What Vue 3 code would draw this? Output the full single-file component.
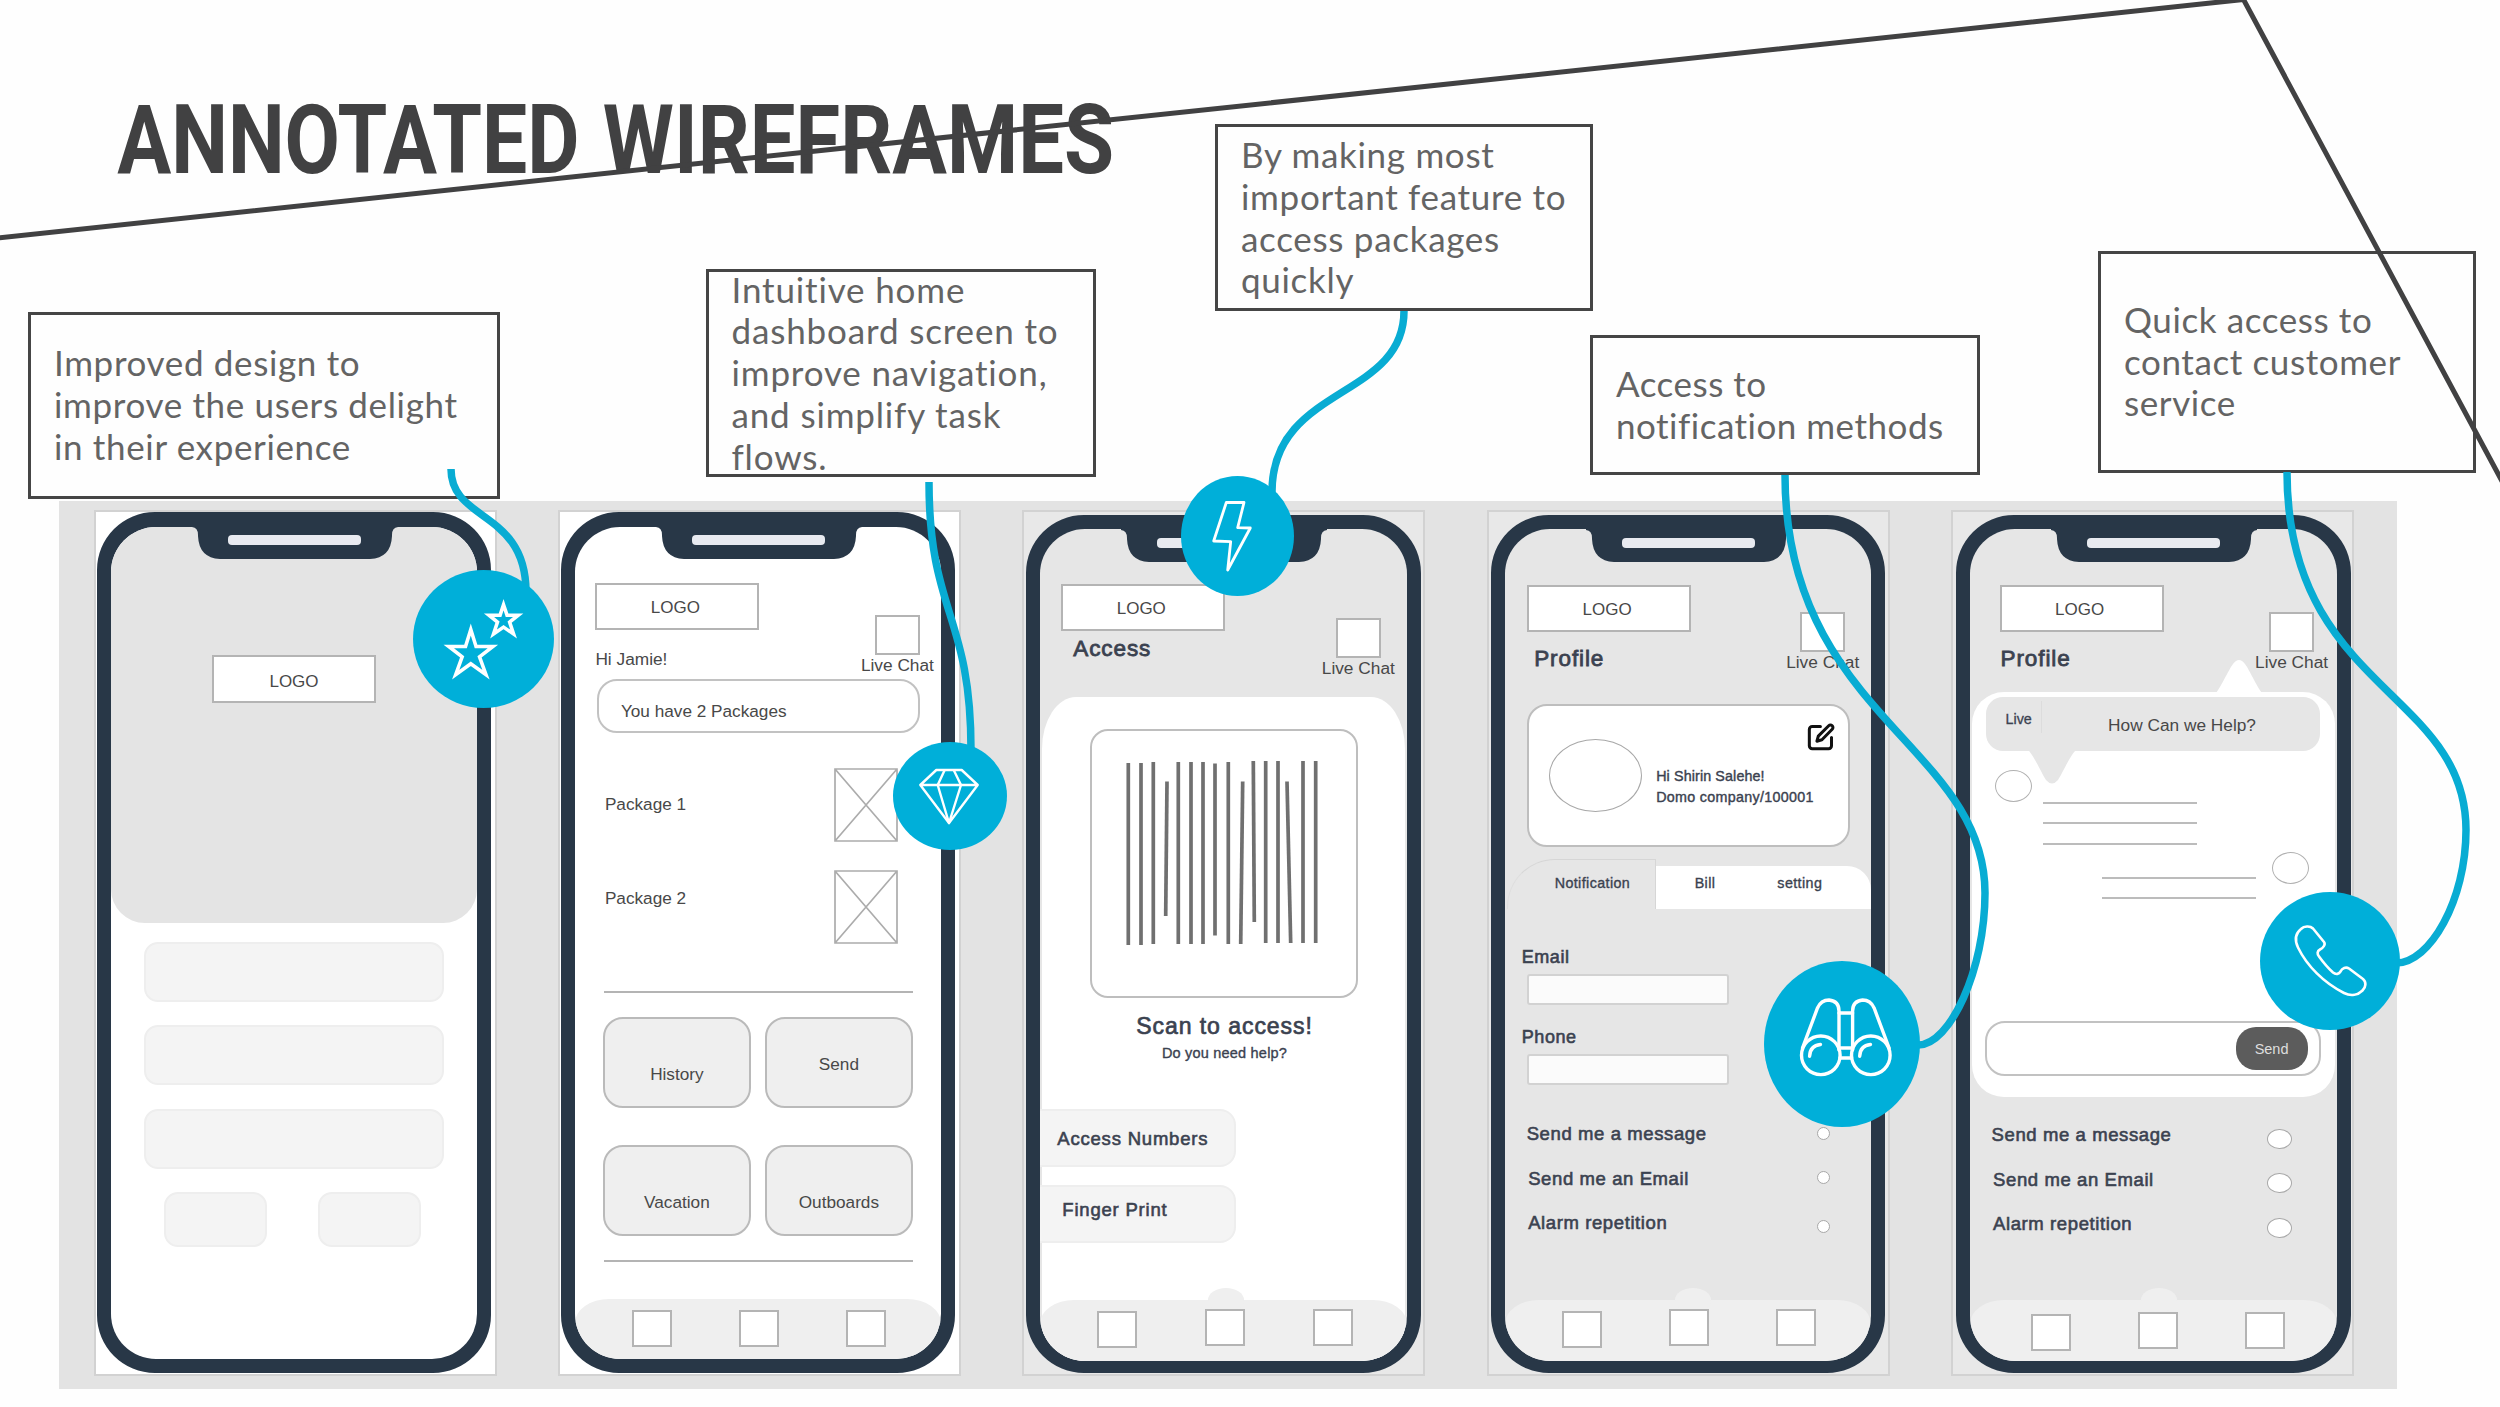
<template>
  <div class="slide">
    <header class="slide-head">
      <svg class="slide-title" width="1240" height="100" viewBox="0 0 1240 100">
        <g transform="scale(0.83 1)">
          <text x="-1" y="78" textLength="557" lengthAdjust="spacingAndGlyphs">ANNOTATED</text>
          <text x="584" y="78" textLength="616" lengthAdjust="spacingAndGlyphs">WIREFRAMES</text>
        </g>
      </svg>
    </header>

    <main class="board">
      <!-- splash -->
      <div class="artboard white">
        <div class="phone">
          <div class="screen">
            <div class="splash">
              <div class="logo"><span>LOGO</span></div>
            </div>
            <div class="login">
              <div v-for="n in 3" :key="n" class="login-field"></div>
              <div class="login-actions">
                <div class="login-btn"></div>
                <div class="login-btn"></div>
              </div>
            </div>
          </div>
          <div class="notch"><svg viewBox="0 0 206 47"><path :d="notchPath" /></svg><i></i></div>
        </div>
      </div>

      <!-- home -->
      <div class="artboard white">
        <div class="phone">
          <div class="screen home">
            <div class="top">
              <div class="top-left">
                <div class="logo"><span>LOGO</span></div>
                <div class="hello">Hi Jamie!</div>
              </div>
              <div class="chat"><div class="chat-box"></div>Live Chat</div>
            </div>
            <div class="notice">You have 2 Packages</div>
            <div class="packages">
              <div v-for="p in packages" :key="p" class="package">
                <span>{{ p }}</span>
                <svg class="thumb" viewBox="0 0 64 74">
                  <path d="M1 1H63V73H1ZM1 1L63 73M63 1L1 73" />
                </svg>
              </div>
            </div>
            <div class="rule"></div>
            <div class="tiles">
              <div v-for="t in tiles" :key="t" class="tile" :class="t.toLowerCase()">{{ t }}</div>
            </div>
            <div class="rule"></div>
            <div class="tabbar"><b></b><b></b><b></b></div>
          </div>
          <div class="notch"><svg viewBox="0 0 206 47"><path :d="notchPath" /></svg><i></i></div>
        </div>
      </div>

      <!-- access -->
      <div class="artboard">
        <div class="phone short">
          <div class="screen access">
            <div class="top">
              <div class="top-left">
                <div class="logo"><span>LOGO</span></div>
                <div class="heading">Access</div>
              </div>
              <div class="chat"><div class="chat-box"></div>Live Chat</div>
            </div>
            <div class="sheet">
              <div class="barcode">
                <svg viewBox="0 0 268 268">
                  <line v-for="(b, i) in bars" :key="i" :x1="b[0]" :y1="b[1]" :x2="b[2]" :y2="b[3]" />
                </svg>
              </div>
              <div class="scan">Scan to access!</div>
              <div class="help">Do you need help?</div>
              <div class="side-btn first">Access Numbers</div>
              <div class="side-btn second">Finger Print</div>
            </div>
            <div class="tabbar bump"><b></b><b></b><b></b></div>
          </div>
          <div class="notch"><svg viewBox="0 0 206 47"><path :d="notchPath" /></svg><i></i></div>
        </div>
      </div>

      <!-- profile -->
      <div class="artboard">
        <div class="phone short">
          <div class="screen profile">
            <div class="top">
              <div class="top-left">
                <div class="logo"><span>LOGO</span></div>
                <div class="heading">Profile</div>
              </div>
              <div class="chat"><div class="chat-box"></div>Live Chat</div>
            </div>
            <div class="card">
              <div class="avatar"></div>
              <div class="who">
                <div>Hi Shirin Salehe!</div>
                <div class="company">Domo company/100001</div>
              </div>
              <svg class="edit" viewBox="0 0 24 24">
                <path d="M11.5 3H4.5a2.5 2.5 0 0 0-2.5 2.5v14A2.5 2.5 0 0 0 4.5 22h14a2.5 2.5 0 0 0 2.5-2.5v-7" />
                <path d="M18.6 2.4a2.1 2.1 0 0 1 3 3L12.8 14.4l-4.3 1.2 1.2-4.3z" />
              </svg>
            </div>
            <div class="tabs">
              <div class="tab-active">Notification</div>
              <div class="tab-rest"><span class="bill">Bill</span><span>setting</span></div>
            </div>
            <div class="form">
              <label>Email</label>
              <div class="input"></div>
              <label>Phone</label>
              <div class="input"></div>
            </div>
            <div class="options">
              <div v-for="o in options" :key="o" class="option"><span>{{ o }}</span><i></i></div>
            </div>
            <div class="tabbar bump"><b></b><b></b><b></b></div>
          </div>
          <div class="notch"><svg viewBox="0 0 206 47"><path :d="notchPath" /></svg><i></i></div>
        </div>
      </div>

      <!-- live chat -->
      <div class="artboard last">
        <div class="phone short">
          <div class="screen live">
            <div class="top">
              <div class="top-left">
                <div class="logo"><span>LOGO</span></div>
                <div class="heading">Profile</div>
              </div>
              <div class="chat"><div class="chat-box"></div>Live Chat</div>
            </div>
            <div class="talk">
              <svg class="tip-up" viewBox="0 0 48 36"><path d="M0 35C4 32 14 10 18 5Q24 -3 30 5C34 10 44 32 48 35Z" /></svg>
              <div class="bubble">
                <span class="live-tag">Live</span>
                <span class="question">How Can we Help?</span>
                <svg class="tip-down" viewBox="0 0 48 34"><path d="M0 0C5 4 14 24 18 30Q24 37 30 30C34 24 43 4 48 0Z" /></svg>
              </div>
              <div class="msg left">
                <div class="face"></div>
                <div class="lines"><hr /><hr /><hr /></div>
              </div>
              <div class="msg right">
                <div class="lines"><hr /><hr /></div>
                <div class="face"></div>
              </div>
              <div class="composer"><div class="send-btn">Send</div></div>
            </div>
            <div class="options">
              <div v-for="o in options" :key="o" class="option"><span>{{ o }}</span><i></i></div>
            </div>
            <div class="tabbar bump"><b></b><b></b><b></b></div>
          </div>
          <div class="notch"><svg viewBox="0 0 206 47"><path :d="notchPath" /></svg><i></i></div>
        </div>
      </div>
    </main>

    <!-- annotations -->
    <div v-for="c in callouts" :key="c.id" class="callout" :class="c.id">
      <div v-for="l in c.lines" :key="l">{{ l }}</div>
    </div>

    <svg class="overlay" viewBox="0 0 2500 1407">
      <path class="edge" d="M-10 238.8L2243.5 -0.5L2510 496" />
      <path v-for="d in connectors" :key="d" class="wire" :d="d" />
    </svg>

    <div class="badge stars">
      <svg viewBox="0 0 141 139" stroke-width="3.6">
        <path d="M57.7 60L63 77H80L66.5 87.5L73 105.5L57.7 94.5L42.5 105.5L49 87.5L35.5 77H52.4Z" />
        <path d="M90.7 35L94.2 45.5H105.5L96.8 52.5L100.8 64.5L90.7 57.5L80.6 64.5L84.6 52.5L76 45.5H87.2Z" />
      </svg>
    </div>
    <div class="badge diamond">
      <svg viewBox="0 0 114 108" stroke-width="2.4" stroke-linejoin="round">
        <path d="M43.3 28H68.7L84.7 43L56 81L27.3 43ZM27.3 43H84.7" />
        <path d="M51.7 28L44.7 43L56 81L68 43L60.7 28" />
      </svg>
    </div>
    <div class="badge bolt">
      <svg viewBox="0 0 113 120" stroke-width="2.8" stroke-linejoin="round">
        <path d="M45.3 26.5H63L56.7 51.7L69.3 52L46.7 94L49.7 65.7L32.7 65Z" />
      </svg>
    </div>
    <div class="badge binoculars">
      <svg viewBox="0 0 156 166" stroke-width="3.4" stroke-linecap="round">
        <circle cx="56.8" cy="94.3" r="19.3" />
        <circle cx="106.8" cy="94.3" r="19.3" />
        <path d="M38.5 87L53.500 47Q57 39 65 39Q75 40 75 50V89M125.1 87L110.1 47Q106.600 39 98.6 39Q88.6 40 88.6 50V89" />
        <path d="M75 52H88.6M75.5 87H88M76 97H87.6" />
        <path d="M45.6 95.3Q46 84.5 56.5 83.5M95.7 95.3Q96 84.5 106.5 83.5" />
      </svg>
    </div>
    <div class="badge call">
      <svg viewBox="0 0 140 138" stroke-width="2.6" stroke-linejoin="round">
        <path d="M41 37C44 34 50 33.5 53 36.5L64 50C66 52.5 63 56 60 57.5C57 59 57 62 59 64.5C63 70 68 76 73 80.5C76 83 79 82 80.5 79.5C82 76 86 74.5 89 76.5L103 87C106.5 90 106 95 102.5 98.5C98 103 91 104.5 84 101C64 91 47 74 38 55.5C34 47 36 41 41 37Z" />
      </svg>
    </div>
  </div>
</template>

<script setup>
const packages = ['Package 1', 'Package 2']
const tiles = ['History', 'Send', 'Vacation', 'Outboards']
const options = ['Send me a message', 'Send me an Email', 'Alarm repetition']

const notchPath = 'M0 0H206V15Q200 15.5 200 23V24Q199 46 178 47H28Q7 46 6 24V23Q6 15.5 0 15Z'

// x1, y1, x2, y2 inside the barcode card
const bars = [
  [38.3, 34, 38.3, 216],
  [51, 34, 51, 216],
  [63.3, 33, 63.3, 215],
  [77, 52.5, 75.7, 187],
  [88.3, 33, 88.3, 215],
  [101, 33, 101, 215],
  [113, 33, 113, 215],
  [125, 34.5, 125, 206.5],
  [138.3, 33, 138.3, 215],
  [152.7, 52.5, 150.7, 215],
  [163.3, 32, 164.3, 193],
  [175.7, 32, 175.7, 214],
  [188, 32, 188, 214],
  [197, 52.5, 200.7, 214],
  [213, 32, 213, 214],
  [225.7, 32, 225.7, 214],
]

const callouts = [
  { id: 'delight', lines: ['Improved design to', 'improve the users delight', 'in their experience'] },
  {
    id: 'dashboard',
    lines: ['Intuitive home', 'dashboard screen to', 'improve navigation,', 'and simplify task', 'flows.'],
  },
  { id: 'feature', lines: ['By making most', 'important feature to', 'access packages', 'quickly'] },
  { id: 'notify', lines: ['Access to', 'notification methods'] },
  { id: 'service', lines: ['Quick access to', 'contact customer', 'service'] },
]

const connectors = [
  'M451 469C451 522 526 510 526 592',
  'M929 482C929 614 971 614 971 750',
  'M1404 311C1404 400 1272 385 1272 492',
  'M1785 475C1785 715 1985 745 1985 893C1985 970 1950 1045 1918 1045',
  'M2287 472C2287 690 2466 690 2466 830C2466 900 2430 963 2396 963',
]
</script>

<style>
body {
  margin: 0;
  background: #fff;
}
</style>

<style scoped>
.slide {
  position: relative;
  width: 2500px;
  height: 1407px;
  overflow: hidden;
  background: #fefefe;
  font-family: 'Liberation Sans', Arial, sans-serif;
  color: #484848;
}
.slide * {
  box-sizing: border-box;
}
.slide-head {
  height: 501px;
  padding: 95px 0 0 118px;
}
.slide-title {
  display: block;
  overflow: visible;
}
.slide-title text {
  font-family: Roboto, sans-serif;
  font-weight: 700;
  font-size: 96px;
  fill: #414142;
}

/* board with the five phones */
.board {
  display: flex;
  gap: 61.4px;
  width: 2338px;
  height: 888px;
  margin-left: 59px;
  padding: 9px 0 0 34.5px;
  background: #e3e3e3;
}
.artboard {
  flex: none;
  width: 403px;
  height: 866px;
  padding: 0 0 0 2px;
  border: 2px solid #d2d2d2;
  background: #e8e8e8;
}
.artboard.white {
  padding-left: 1px;
  background: #fff;
}
.artboard.last {
  padding-left: 3px;
}
.phone {
  position: relative;
  width: 394.5px;
  height: 861px;
  border: 14px solid #283747;
  border-top-width: 15px;
  border-radius: 58px;
  background: #283747;
}
.phone.short {
  height: 858px;
  margin-top: 3px;
  border-top-width: 14px;
  border-bottom-width: 12px;
}
.screen {
  position: relative;
  display: flex;
  flex-direction: column;
  height: 100%;
  overflow: hidden;
  border-radius: 45px;
  background: #fff;
}
.short .screen {
  background: #e6e6e6;
}
.notch {
  position: absolute;
  top: -15px;
  left: 81px;
  width: 206px;
  height: 47px;
}
.short .notch {
  top: -14px;
}
.notch svg {
  display: block;
  width: 206px;
  height: 47px;
  fill: #283747;
}
.notch i {
  position: absolute;
  top: 22.5px;
  left: 36px;
  width: 133px;
  height: 10px;
  border-radius: 4px;
  background: #e8eaf0;
}

/* shared pieces */
.logo {
  display: flex;
  justify-content: center;
  width: 164px;
  height: 47.5px;
  padding-top: 13px;
  border: 2px solid #b4b4b4;
  background: #fff;
  font-size: 17px;
  line-height: 20px;
}
.logo span {
  margin-right: 4px;
}
.top {
  display: flex;
  justify-content: space-between;
  flex: none;
}
.chat {
  display: flex;
  flex-direction: column;
  align-items: center;
  width: 73px;
  font-size: 17.3px;
  line-height: 20px;
  white-space: nowrap;
}
.chat-box {
  width: 45px;
  height: 40px;
  border: 2px solid #b4b4b4;
  background: #fff;
}
.heading {
  font-size: 22.5px;
  line-height: 24px;
  letter-spacing: 0.9px;
  color: #3b4250;
  -webkit-text-stroke: 0.8px #3b4250;
}
.tabbar {
  position: absolute;
  left: 0;
  right: 0;
  bottom: 0;
  display: flex;
  gap: 67px;
  height: 60px;
  padding: 11px 0 0 57px;
  border-radius: 34px 34px 0 0 / 24px 24px 0 0;
  background: #efefef;
}
.tabbar b {
  position: relative;
  width: 40px;
  height: 37px;
  border: 2px solid #b4b4b4;
  background: #fff;
}
.tabbar.bump {
  height: 61.5px;
}
.bump b + b {
  margin-top: -2px;
}
.bump::before {
  content: '';
  position: absolute;
  top: -12px;
  left: 168px;
  width: 36px;
  height: 24px;
  border-radius: 50%;
  background: #efefef;
}

/* splash */
.splash {
  flex: none;
  height: 396px;
  padding: 128px 0 0 101.5px;
  border-radius: 0 0 34px 34px;
  background: #e4e4e4;
}
.splash .logo {
  padding-top: 15px;
}
.splash .logo span {
  margin-right: 0;
}
.login {
  display: flex;
  flex-direction: column;
  gap: 23.5px;
  padding: 18.5px 33.5px 0;
}
.login-field,
.login-btn {
  height: 60px;
  border: 2px solid #eee;
  border-radius: 14px;
  background: #f4f4f4;
}
.login-actions {
  display: flex;
  gap: 51px;
  padding-left: 20px;
}
.login-btn {
  width: 103px;
  height: 55px;
}

/* home */
.home .top {
  height: 152px;
  padding: 0 7.5px 0 20.5px;
}
.home .top-left {
  padding-top: 55.5px;
}
.home .chat {
  padding-top: 88px;
}
.hello {
  margin-top: 18.5px;
  font-size: 17.3px;
  line-height: 20px;
}
.notice {
  flex: none;
  width: 323.5px;
  height: 54px;
  margin-left: 22px;
  padding: 20px 0 0 22px;
  border: 2px solid #c2c2c2;
  border-radius: 20px;
  font-size: 17.2px;
  line-height: 20px;
}
.packages {
  display: flex;
  flex-direction: column;
  gap: 28px;
  padding: 35px 43px 0 30px;
}
.package {
  display: flex;
  justify-content: space-between;
  font-size: 17.2px;
  line-height: 20px;
}
.package span {
  margin-top: 26px;
}
.package + .package span {
  margin-top: 17.5px;
}
.thumb {
  width: 64px;
  height: 74px;
  fill: none;
  stroke: #acacac;
  stroke-width: 1.7;
}
.rule {
  flex: none;
  width: 309px;
  height: 2px;
  margin-left: 29px;
  background: #b4b4b4;
}
.packages + .rule {
  margin-top: 47px;
}
.tiles {
  display: grid;
  grid-template-columns: 148px 148px;
  grid-auto-rows: 91px;
  gap: 37px 14px;
  margin: 24px 0 24px 28px;
}
.tile {
  display: flex;
  justify-content: center;
  padding-top: 45px;
  border: 2px solid #bababa;
  border-radius: 20px;
  background: #efefef;
  font-size: 17.2px;
  line-height: 20px;
}
.tile.send {
  padding-top: 35px;
}

/* access */
.access .top {
  height: 168px;
  padding: 0 12px 0 21px;
}
.access .top-left {
  padding-top: 54.5px;
}
.access .chat {
  padding-top: 89px;
}
.access .heading {
  margin: 6px 0 0 12px;
}
.access .tabbar {
  gap: 68px;
}
.sheet {
  flex: 1;
  margin: 0 1.5px;
  border-radius: 34px 34px 0 0 / 52px 52px 0 0;
  background: #fff;
}
.barcode {
  width: 268.5px;
  height: 268.5px;
  margin: 32px 0 0 48px;
  border: 2px solid #bebebe;
  border-radius: 18px;
}
.barcode svg {
  display: block;
  margin: -2px;
  width: 268px;
  height: 268px;
  stroke: #707070;
  stroke-width: 3.7;
}
.scan,
.help {
  padding-left: 2px;
  text-align: center;
  color: #3b4250;
}
.scan {
  margin-top: 16.5px;
  font-size: 23px;
  line-height: 24px;
  letter-spacing: 0.95px;
  -webkit-text-stroke: 0.7px #3b4250;
}
.help {
  margin: 5px 0 46px;
  font-size: 14.5px;
  line-height: 20px;
  letter-spacing: 0.2px;
  -webkit-text-stroke: 0.35px #3b4250;
}
.side-btn {
  width: 196px;
  height: 58px;
  margin-left: -1.5px;
  padding: 18px 0 0 17px;
  border: 2px solid #eee;
  border-left: 0;
  border-radius: 0 16px 16px 0;
  background: #f4f4f4;
  font-size: 18.5px;
  line-height: 20px;
  letter-spacing: 0.8px;
  color: #3b4250;
  -webkit-text-stroke: 0.6px #3b4250;
}
.side-btn.second {
  margin-top: 18px;
  padding: 12.5px 0 0 22px;
}

/* profile */
.profile .top {
  height: 175px;
  padding: 0 12px 0 22.5px;
}
.profile .top-left,
.live .top-left {
  padding-top: 55.5px;
}
.profile .chat,
.live .chat {
  padding-top: 83px;
}
.profile .heading {
  margin: 14.5px 0 0 7px;
}
.card {
  position: relative;
  display: flex;
  flex: none;
  width: 323px;
  height: 143px;
  margin-left: 22px;
  padding-left: 20px;
  border: 2px solid #bebebe;
  border-radius: 20px;
  background: #fff;
}
.avatar {
  width: 93px;
  height: 73px;
  margin-top: 33px;
  border: 1.5px solid #a8a8a8;
  border-radius: 50%;
}
.who {
  margin: 60px 0 0 14.5px;
  font-size: 14.3px;
  line-height: 21px;
  color: #3b4250;
  -webkit-text-stroke: 0.4px #3b4250;
  letter-spacing: 0.12px;
}
.company {
  letter-spacing: 0.3px;
}
.edit {
  position: absolute;
  top: 17px;
  right: 12.5px;
  width: 28px;
  height: 28px;
  fill: none;
  stroke: #111;
  stroke-width: 2.6;
  stroke-linecap: round;
  stroke-linejoin: round;
}
.tabs {
  display: flex;
  flex: none;
  height: 50px;
  margin-top: 11.5px;
  font-size: 14.3px;
  line-height: 20px;
  letter-spacing: 0.4px;
  color: #3b4250;
  -webkit-text-stroke: 0.35px #3b4250;
}
.tab-active {
  width: 149px;
  margin-left: 2px;
  padding: 13px 0 0 47px;
  border: 1.5px solid #d6d6d6;
  border-left-color: #dedede;
  border-bottom: 0;
  border-radius: 48px 0 0 0;
}
.tab-rest {
  display: flex;
  flex: 1;
  gap: 62px;
  margin-top: 7px;
  padding: 7px 0 0 39px;
  border-radius: 0 24px 0 0;
  background: #fff;
}
.form {
  padding: 38px 0 0 17px;
}
.form label {
  display: block;
  font-size: 18px;
  line-height: 20px;
  letter-spacing: 0.6px;
  color: #3b4250;
  -webkit-text-stroke: 0.6px #3b4250;
}
.input {
  width: 202px;
  height: 31px;
  margin: 7px 0 22.5px 5.5px;
  border: 2px solid #d2d2d2;
  border-radius: 3px;
  background: #fbfbfb;
}
.options {
  display: flex;
  flex-direction: column;
  gap: 24.5px;
  padding: 16.5px 41px 0 22px;
  font-size: 18.5px;
  line-height: 20px;
  letter-spacing: 0.6px;
  color: #3b4250;
  -webkit-text-stroke: 0.6px #3b4250;
}
.option {
  display: flex;
  align-items: center;
  justify-content: space-between;
  height: 20px;
}
.option + .option span {
  margin-left: 1.5px;
}
.option i {
  width: 13px;
  height: 13px;
  margin-top: -2px;
  border: 1.5px solid #a8a8a8;
  border-radius: 50%;
  background: #fff;
}
.profile .option:last-child i {
  margin-top: 7px;
}
.profile .tabbar::before {
  left: 170px;
}

/* live chat */
.live .top {
  height: 163px;
  padding: 0 8.5px 0 29.5px;
}
.live .heading {
  margin: 14.5px 0 0 1px;
}
.talk {
  position: relative;
  flex: none;
  height: 405px;
  margin: 0 1.5px;
  padding: 5px 0 0 14px;
  border-radius: 32px;
  background: #fff;
}
.tip-up {
  position: absolute;
  top: -33px;
  left: 243px;
  width: 48px;
  height: 36px;
  fill: #fff;
}
.bubble {
  position: relative;
  display: flex;
  width: 334.5px;
  height: 54px;
  border-radius: 17px;
  background: #e6e6e6;
}
.live-tag {
  width: 56px;
  height: 32px;
  margin: 4px 0 0;
  padding: 8px 0 0 20px;
  border-right: 1px solid #dcdcdc;
  font-size: 14.3px;
  line-height: 20px;
  color: #3b4250;
  -webkit-text-stroke: 0.3px #3b4250;
}
.question {
  margin: 17.5px 0 0 66.5px;
  font-size: 17.3px;
  line-height: 20px;
}
.tip-down {
  position: absolute;
  top: 53px;
  left: 42px;
  width: 48px;
  height: 34px;
  fill: #e6e6e6;
}
.msg {
  display: flex;
}
.msg.left {
  margin-top: 19px;
  padding-left: 9px;
}
.msg.right {
  margin-top: 7px;
  padding-left: 116px;
}
.face {
  width: 37px;
  height: 32px;
  border: 1.5px solid #b0b0b0;
  border-radius: 50%;
}
.lines {
  display: flex;
  flex-direction: column;
  gap: 18.5px;
  width: 154px;
  margin: 31.5px 0 0 11px;
}
.right .lines {
  margin: 25px 16px 0 0;
}
.lines hr {
  width: 100%;
  height: 2px;
  margin: 0;
  border: 0;
  background: #bcbcbc;
}
.composer {
  display: flex;
  justify-content: flex-end;
  width: 336px;
  height: 55px;
  margin: 122px 0 0 -0.5px;
  padding: 4px 11.5px 0 0;
  border: 2px solid #c2c2c2;
  border-radius: 20px;
}
.send-btn {
  width: 72px;
  height: 43px;
  border-radius: 20px;
  background: #5c5c5c;
  color: #dedede;
  font-size: 14.5px;
  line-height: 44px;
  text-align: center;
}
.live .options {
  padding: 28px 45px 0 21.5px;
}
.live .option i {
  width: 24.5px;
  height: 20px;
  margin-top: 7px;
}
.live .tabbar {
  gap: 67px;
  padding: 14px 0 0 60.5px;
}
.live .tabbar::before {
  left: 171px;
}

/* annotations */
.callout {
  position: absolute;
  display: flex;
  flex-direction: column;
  justify-content: center;
  padding-left: 23px;
  border: 3px solid #454545;
  font-family: Lato, sans-serif;
  font-size: 35px;
  line-height: 41.7px;
  letter-spacing: 0.65px;
  white-space: nowrap;
  color: #646464;
}
.delight {
  left: 28px;
  top: 311.5px;
  width: 472px;
  height: 187px;
}
.dashboard {
  left: 705.5px;
  top: 269px;
  width: 390px;
  height: 208px;
  letter-spacing: 0.85px;
}
.feature {
  left: 1215px;
  top: 124px;
  width: 378px;
  height: 187px;
  letter-spacing: 0.7px;
}
.notify {
  left: 1590px;
  top: 335px;
  width: 390px;
  height: 140px;
  letter-spacing: 0.5px;
}
.service {
  left: 2098px;
  top: 250.5px;
  width: 378px;
  height: 222px;
  letter-spacing: 0.6px;
}
.overlay {
  position: absolute;
  inset: 0;
  width: 2500px;
  height: 1407px;
  fill: none;
}
.edge {
  stroke: #414142;
  stroke-width: 5;
}
.wire {
  stroke: #08acd3;
  stroke-width: 7.5;
}
.badge {
  position: absolute;
  border-radius: 50%;
  background: #00afd9;
}
.badge svg {
  display: block;
  width: 100%;
  height: 100%;
  fill: none;
  stroke: #fff;
}
.stars {
  left: 412.5px;
  top: 570px;
  width: 141px;
  height: 138px;
}
.diamond {
  left: 893px;
  top: 741.5px;
  width: 114px;
  height: 108px;
}
.bolt {
  left: 1181px;
  top: 476px;
  width: 113px;
  height: 120px;
}
.binoculars {
  left: 1764px;
  top: 961px;
  width: 156px;
  height: 166px;
}
.call {
  left: 2260px;
  top: 892px;
  width: 140px;
  height: 138px;
}
</style>
